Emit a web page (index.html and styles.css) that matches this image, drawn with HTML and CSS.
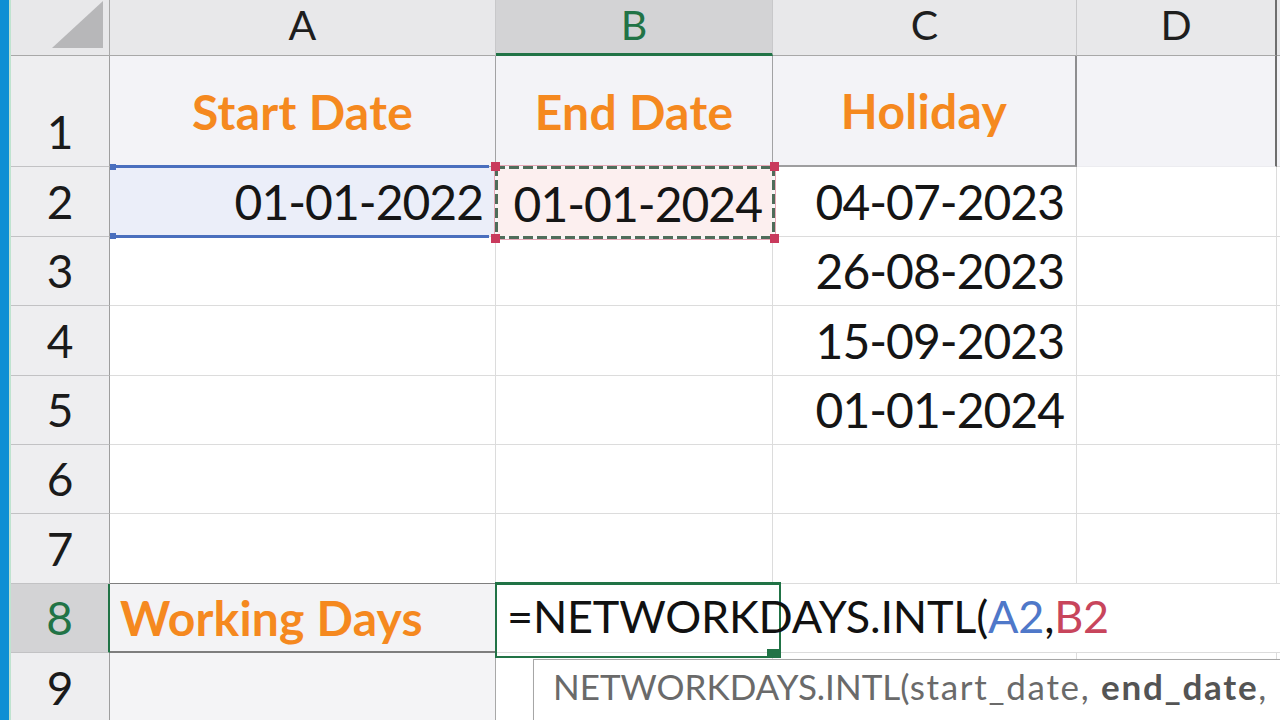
FILE: index.html
```html
<!DOCTYPE html>
<html lang="en">
<head>
<meta charset="utf-8">
<title>NETWORKDAYS.INTL</title>
<link rel="stylesheet" href="styles.css">
</head>
<body>
<div class="app">
  <div class="strip"></div>
  <div class="sheet">
    <div class="corner"><svg class="tri" width="56" height="50" viewBox="0 0 56 50"><polygon points="2,48 53,48 53,1" fill="#b7b7b9"/></svg></div>
    <div class="ch">A</div>
    <div class="ch ch-sel">B</div>
    <div class="ch">C</div>
    <div class="ch ch-d">D</div>
    <div class="ch ch-e"></div>

    <div class="rh rh1">1</div>
    <div class="c t1 t1-a"><span class="hd">Start Date</span></div>
    <div class="c t1 t1-b"><span class="hd">End Date</span></div>
    <div class="c t1 t1-c"><span class="hd">Holiday</span></div>
    <div class="c t1 t1-d"></div>
    <div class="c t1 c-e"></div>

    <div class="rh">2</div>
    <div class="c num ref-a"><span class="v">01-01-2022</span></div>
    <div class="c ref-b"><div class="ants-in"><span class="v">01-01-2024</span></div></div>
    <div class="c num"><span class="v">04-07-2023</span></div>
    <div class="c"></div>
    <div class="c c-e"></div>

    <div class="rh">3</div>
    <div class="c"></div>
    <div class="c"></div>
    <div class="c num"><span class="v">26-08-2023</span></div>
    <div class="c"></div>
    <div class="c c-e"></div>

    <div class="rh">4</div>
    <div class="c"></div>
    <div class="c"></div>
    <div class="c num"><span class="v">15-09-2023</span></div>
    <div class="c"></div>
    <div class="c c-e"></div>

    <div class="rh">5</div>
    <div class="c"></div>
    <div class="c"></div>
    <div class="c num"><span class="v">01-01-2024</span></div>
    <div class="c"></div>
    <div class="c c-e"></div>

    <div class="rh">6</div>
    <div class="c"></div>
    <div class="c"></div>
    <div class="c"></div>
    <div class="c"></div>
    <div class="c c-e"></div>

    <div class="rh">7</div>
    <div class="c"></div>
    <div class="c"></div>
    <div class="c"></div>
    <div class="c"></div>
    <div class="c c-e"></div>

    <div class="rh rh-sel">8</div>
    <div class="c wd"><span class="hd hd-wd">Working Days</span></div>
    <div class="c editor"><span class="f">=NETWORKDAYS.INTL(<span class="fa">A2</span>,<span class="fb">B2</span></span></div>

    <div class="rh">9</div>
    <div class="c a9"></div>
    <div class="c"></div>
    <div class="c"></div>
    <div class="c"></div>
    <div class="c c-e"></div>
  </div>
  <div class="tip">NETWORKDAYS.INTL(<span class="lc">start_date, <b>end_date</b>, <b>[weekend]</b></span></div>
</div>
</body>
</html>
```
FILE: styles.css
```css
* { box-sizing: border-box; }
html, body { margin: 0; padding: 0; }
body {
  width: 1280px;
  height: 720px;
  overflow: hidden;
  background: #ffffff;
  font-family: Lato, "Open Sans", sans-serif;
  color: #151515;
}
.app {
  position: relative;
  display: flex;
  width: 1280px;
  height: 720px;
  overflow: hidden;
}
.strip {
  flex: 0 0 11px;
  background: #0e8fd4;
  border-right: 2px solid #bfe3d0;
}
.sheet {
  flex: 1 1 auto;
  display: grid;
  grid-template-columns: 99px 386px 277px 304px 200px 1fr;
  grid-template-rows: 56px 111px 70px 69px 70px 69px 69px 70px 69px 70px;
}
.corner {
  background: #e8e8ea;
  border-right: 1px solid #a8a8a8;
  border-bottom: 1px solid #a8a8a8;
  position: relative;
}
.tri { position: absolute; left: 39px; top: 0; }
.ch {
  background: #e8e8ea;
  border-right: 1px solid #c8c8ca;
  border-bottom: 1px solid #a8a8a8;
  display: flex;
  align-items: center;
  justify-content: center;
  font-size: 41px;
  line-height: 1;
  padding-bottom: 6px;
  color: #1e1e1e;
}
.ch-sel {
  background: #d3d3d5;
  color: #217346;
  border-bottom: 3px solid #217346;
  padding-bottom: 4px;
}
.ch-d { border-right: 2px solid #6e6e6e; }
.ch-e { border-right: none; }
.rh {
  background: #eeeef0;
  border-right: 1px solid #9e9e9e;
  border-bottom: 1px solid #c2c2c4;
  display: flex;
  align-items: flex-end;
  justify-content: center;
  font-size: 46px;
  line-height: 1;
  padding-bottom: 11px;
  color: #1a1a1a;
}
.rh-sel {
  background: #d3d3d5;
  color: #217346;
  border-right: 2px solid #217346;
}
.c {
  background: #ffffff;
  border-right: 1px solid #dcdcdc;
  border-bottom: 1px solid #dcdcdc;
  display: flex;
  align-items: flex-end;
  font-size: 48px;
  line-height: 1;
  padding-bottom: 10px;
  min-width: 0;
}
.c-e { border-right: none; }
.num { justify-content: flex-end; padding-right: 12px; }
.v { white-space: nowrap; letter-spacing: -1px; }
.t1 {
  background: #f3f3f7;
  justify-content: center;
  padding-bottom: 30px;
}
.t1-a, .t1-b { border-right: 1px solid #a2a2a4; border-bottom: 1px solid #a2a2a4; }
.t1-c { border-right: 2px solid #8e8e90; border-bottom: 2px solid #9e9ea0; }
.t1-d { border-bottom: 1px solid #ececf0; border-right: 2px solid #6e6e6e; }
.hd {
  font-weight: 700;
  color: #f5891f;
  font-size: 48px;
  white-space: nowrap;
  letter-spacing: 0.3px;
}
.ref-a {
  position: relative;
  background: #ebeef9;
}
.ref-a::before {
  content: "";
  position: absolute;
  left: 3px;
  right: 6px;
  top: -2px;
  bottom: -2px;
  border-top: 3px solid #4a6fbe;
  border-bottom: 3px solid #4a6fbe;
}
.ref-a::after {
  content: "";
  position: absolute;
  left: 0;
  top: -3px;
  bottom: -3px;
  width: 6px;
  background:
    linear-gradient(#4a6fbe, #4a6fbe) left top / 6px 6px no-repeat,
    linear-gradient(#4a6fbe, #4a6fbe) left bottom / 6px 6px no-repeat;
}
.ref-b {
  position: relative;
  padding: 0;
  border-right: none;
  border-bottom: none;
  overflow: visible;
}
.ref-b::before {
  content: "";
  position: absolute;
  left: -1px;
  right: -2px;
  top: -1px;
  bottom: -2px;
  outline: 1px solid #e6a7b6;
  background:
    repeating-linear-gradient(90deg, #4f6c5a 0 10px, #f6f6f6 10px 14px) left top / 100% 3px no-repeat,
    repeating-linear-gradient(90deg, #4f6c5a 0 10px, #f6f6f6 10px 14px) left bottom / 100% 3px no-repeat,
    repeating-linear-gradient(180deg, #4f6c5a 0 10px, #f6f6f6 10px 14px) left top / 3px 100% no-repeat,
    repeating-linear-gradient(180deg, #4f6c5a 0 10px, #f6f6f6 10px 14px) right top / 3px 100% no-repeat,
    #fcefef;
}
.ref-b::after {
  content: "";
  position: absolute;
  left: -5px;
  right: -6px;
  top: -5px;
  bottom: -6px;
  z-index: 3;
  background:
    linear-gradient(#c93a5d, #c93a5d) left top / 9px 9px no-repeat,
    linear-gradient(#c93a5d, #c93a5d) right top / 9px 9px no-repeat,
    linear-gradient(#c93a5d, #c93a5d) left bottom / 9px 9px no-repeat,
    linear-gradient(#c93a5d, #c93a5d) right bottom / 9px 9px no-repeat;
}
.ants-in {
  position: relative;
  z-index: 2;
  margin: 2px 1px 1px 2px;
  flex: 1 1 auto;
  align-self: stretch;
  display: flex;
  align-items: flex-end;
  justify-content: flex-end;
  padding-right: 10px;
  padding-bottom: 8px;
}
.wd {
  background: #f3f3f5;
  border-top: 1px solid #7e7e7e;
  border-bottom: 2px solid #7e7e7e;
  border-right: 1px solid #8e8e8e;
  margin-top: -1px;
  padding-left: 10px;
  padding-bottom: 9px;
}
.hd-wd { font-size: 48px; letter-spacing: 0.2px; }
.a9 { background: #f4f4f6; border-right: 1px solid #a8a8a8; }
.editor {
  grid-column: 3 / span 4;
  position: relative;
  z-index: 4;
  border-right: none;
  padding-left: 11px;
  padding-bottom: 13px;
  overflow: visible;
}
.editor::before {
  content: "";
  position: absolute;
  left: -1px;
  top: -2px;
  width: 282px;
  height: 71px;
  border: 2px solid #217346;
  border-top-width: 3px;
}
.editor::after {
  content: "";
  position: absolute;
  left: 271px;
  top: 65px;
  width: 12px;
  height: 7px;
  background: #217346;
}
.f { white-space: nowrap; font-size: 45px; color: #111; position: relative; letter-spacing: -0.2px; }
.fa { color: #4f78c9; }
.fb { color: #c8455c; }
.tip {
  position: absolute;
  left: 533px;
  top: 659px;
  width: 820px;
  height: 90px;
  background: #ffffff;
  border: 1px solid #a6a6a6;
  box-shadow: 1px 1px 2px rgba(0,0,0,0.15);
  z-index: 10;
  font-size: 35px;
  color: #6a6a6a;
  padding: 5px 0 0 19px;
  white-space: nowrap;
  line-height: 1.2;
}
.lc { letter-spacing: 1.7px; }
.tip b { font-weight: 700; color: #545454; }
```
